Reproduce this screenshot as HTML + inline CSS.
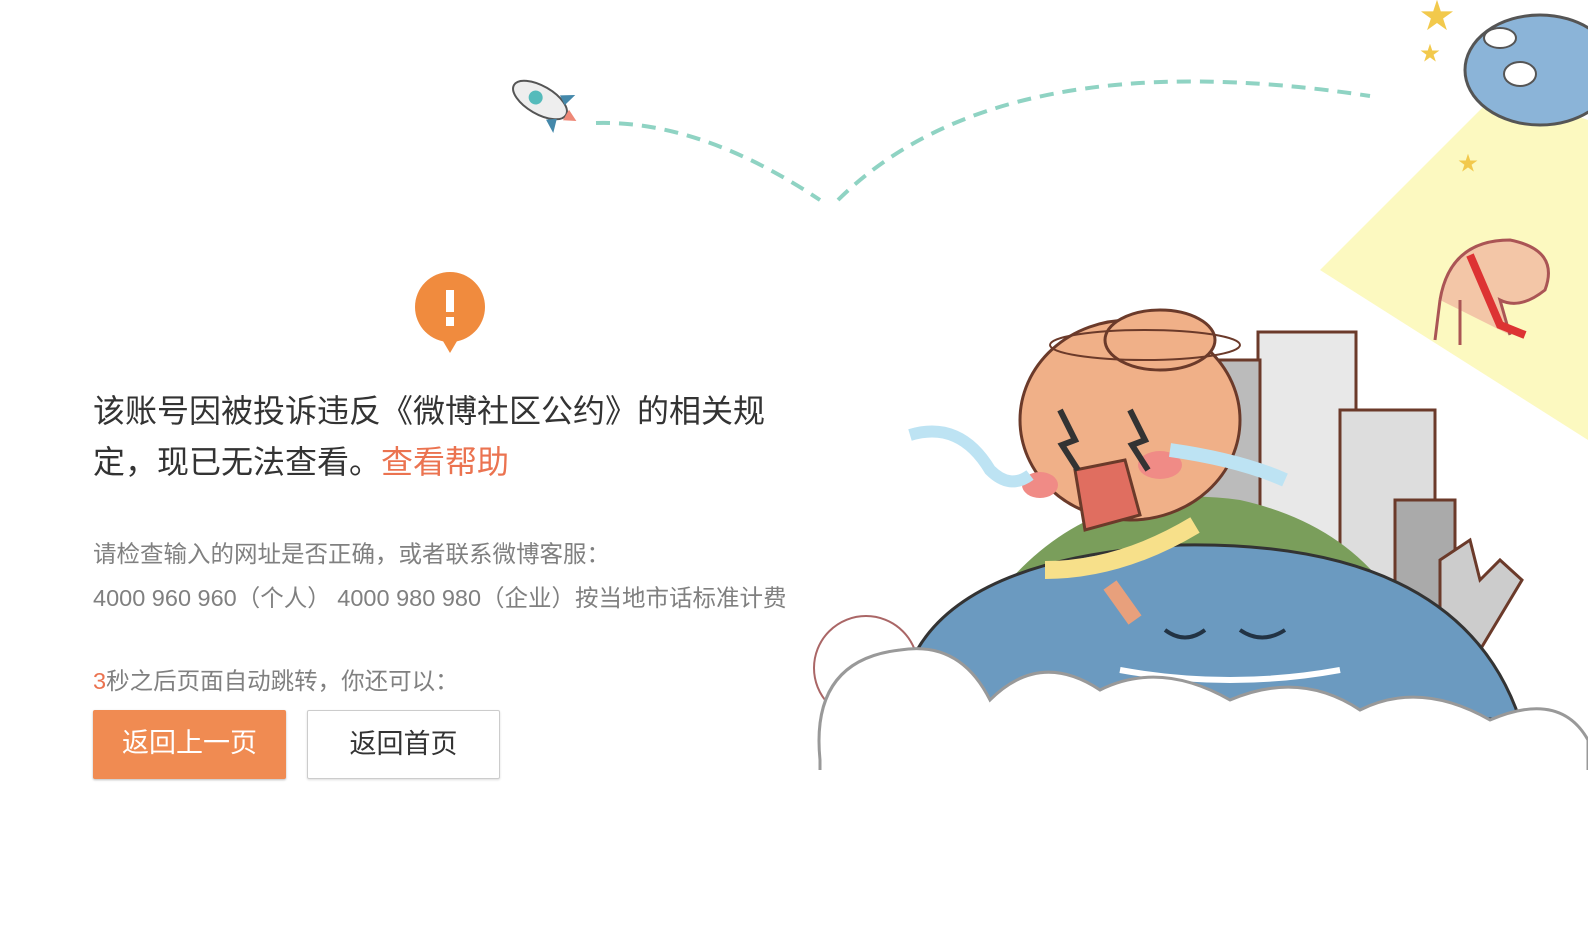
<!DOCTYPE html>
<html><head><meta charset="utf-8"><style>
body{margin:0;width:1588px;height:946px;background:#fff;position:relative;overflow:hidden;font-family:"Liberation Sans","Noto Sans CJK SC",sans-serif}
.t{position:absolute;left:93px;top:386px;width:720px;font-size:32px;line-height:51px;color:#333}
.t a{color:#eb7350;text-decoration:none}
.s{position:absolute;left:93px;font-size:23.5px;color:#808080;white-space:nowrap}
.b{position:absolute;top:710px;height:69px;width:193px;box-sizing:border-box;font-size:27px;line-height:67px;text-align:center}
</style></head><body>
<svg style="position:absolute;left:0;top:0" width="1588" height="946">
<path d="M596 123 Q700 120 820 200" stroke="#8fd3c3" stroke-width="4" fill="none" stroke-dasharray="14 9"/>
<path d="M838 200 Q1000 40 1370 96" stroke="#8fd3c3" stroke-width="4" fill="none" stroke-dasharray="14 9"/>
<g transform="translate(540,100) rotate(-60)"><ellipse cx="0" cy="0" rx="14" ry="30" fill="#eee" stroke="#555" stroke-width="2"/><circle cx="0" cy="-5" r="7" fill="#5bb"/><path d="M-14 15 L-22 28 L-8 24Z M14 15 L22 28 L8 24Z" fill="#48a"/><path d="M-6 30 L0 42 L6 30Z" fill="#e87"/></g>
<polygon points="1320,270 1500,90 1588,120 1588,440" fill="#fbf7b0" opacity=".8"/>
<ellipse cx="1540" cy="70" rx="75" ry="55" fill="#8bb4d8" stroke="#555" stroke-width="3"/>
<ellipse cx="1500" cy="38" rx="16" ry="10" fill="#fff" stroke="#555" stroke-width="2"/><ellipse cx="1520" cy="74" rx="16" ry="12" fill="#fff" stroke="#555" stroke-width="2"/>
<text x="1420" y="28" font-size="34" fill="#f2c94c">★</text><text x="1420" y="60" font-size="20" fill="#f2c94c">★</text><text x="1458" y="170" font-size="20" fill="#f2c94c">★</text>
<path d="M1440 300 Q1450 240 1510 240 Q1560 250 1545 290 Q1520 310 1500 300 L1510 335 M1440 300 L1435 340 M1460 300 L1460 345" fill="#f3c6a7" stroke="#a55" stroke-width="3"/>
<path d="M1470 255 L1500 325 L1525 335" stroke="#d33" stroke-width="8" fill="none"/>
<rect x="1258" y="332" width="98" height="220" fill="#e8e8e8" stroke="#6b3a2a" stroke-width="3"/>
<rect x="1200" y="360" width="60" height="170" fill="#bbb" stroke="#6b3a2a" stroke-width="3"/>
<rect x="1340" y="410" width="95" height="190" fill="#ddd" stroke="#6b3a2a" stroke-width="3"/>
<rect x="1395" y="500" width="60" height="140" fill="#aaa" stroke="#6b3a2a" stroke-width="3"/>
<path d="M1440 560 L1470 540 L1480 580 L1500 560 L1522 580 L1480 650 L1440 630Z" fill="#ccc" stroke="#6b3a2a" stroke-width="3"/>
<path d="M1010 580 Q1100 480 1240 500 Q1330 520 1380 580 Z" fill="#7a9e5b"/>
<path d="M900 700 Q920 560 1180 545 Q1460 540 1520 720 Z" fill="#6b9ac0" stroke="#333" stroke-width="3"/>
<path d="M1120 670 Q1230 690 1340 670" stroke="#fff" stroke-width="6" fill="none"/>
<path d="M1165 630 Q1185 645 1205 630 M1240 630 Q1262 645 1285 630" stroke="#234" stroke-width="4" fill="none"/>
<circle cx="866" cy="668" r="52" fill="#fff" stroke="#a66" stroke-width="2"/>
<path d="M820 760 Q810 660 900 650 Q960 640 990 700 Q1040 650 1100 690 Q1160 660 1230 700 Q1300 670 1360 710 Q1420 680 1490 720 Q1560 690 1588 740 L1588 946 L820 946Z" fill="#fff" stroke="#999" stroke-width="3"/>
<rect x="812" y="770" width="780" height="180" fill="#fff"/>
<ellipse cx="1130" cy="420" rx="110" ry="100" fill="#f0b088" stroke="#6b3a2a" stroke-width="3"/>
<ellipse cx="1160" cy="340" rx="55" ry="30" fill="#f0b088" stroke="#6b3a2a" stroke-width="3"/>
<ellipse cx="1145" cy="345" rx="95" ry="15" fill="none" stroke="#6b3a2a" stroke-width="2"/>
<path d="M1075 470 L1125 460 L1140 515 L1085 530Z" fill="#e06e60" stroke="#6b3a2a" stroke-width="3"/>
<ellipse cx="1160" cy="465" rx="22" ry="14" fill="#f08b86"/><ellipse cx="1040" cy="485" rx="18" ry="13" fill="#f08b86"/>
<path d="M1060 410 L1075 440 L1062 445 L1078 470 M1130 410 L1145 440 L1132 445 L1148 470" stroke="#333" stroke-width="6" fill="none"/>
<path d="M910 435 Q960 420 990 470 Q1010 490 1030 475" stroke="#bde3f3" stroke-width="12" fill="none"/>
<path d="M1170 450 Q1240 460 1285 480" stroke="#bde3f3" stroke-width="14" fill="none"/>
<path d="M1045 570 Q1120 570 1195 525" stroke="#f7e08a" stroke-width="18" fill="none"/>
<path d="M1110 585 L1135 620" stroke="#e8a07c" stroke-width="16"/>
</svg>
<svg style="position:absolute;left:414px;top:272px" width="72" height="82"><circle cx="36" cy="35" r="35" fill="#f08b3e"/><path d="M26 64 L36 81 L46 64Z" fill="#f08b3e"/><rect x="32" y="18" width="8" height="22" fill="#fff"/><rect x="32" y="45" width="8" height="9" fill="#fff"/></svg>
<div class="t">该账号因被投诉违反《微博社区公约》的相关规定，现已无法查看。<a>查看帮助</a></div>
<div class="s" style="top:535px">请检查输入的网址是否正确，或者联系微博客服：</div>
<div class="s" style="top:579px">4000 960 960（个人） 4000 980 980（企业）按当地市话标准计费</div>
<div class="s" style="top:662px"><span style="color:#eb7350">3</span>秒之后页面自动跳转，你还可以：</div>
<div class="b" style="left:93px;background:#f08b52;color:#fff;border-radius:2px;box-shadow:0 1px 2px #bbb">返回上一页</div>
<div class="b" style="left:307px;border:1px solid #ccc;color:#333;border-radius:2px;box-shadow:0 1px 2px #ddd">返回首页</div>
</body></html>
